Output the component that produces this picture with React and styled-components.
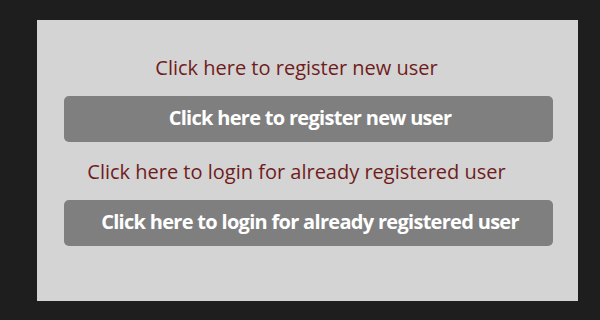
import React from 'react';
import styled, { createGlobalStyle } from 'styled-components';

const GlobalStyle = createGlobalStyle`
  body {
    margin: 0;
    background: #1e1e1e;
    font-family: "Open Sans", "Liberation Sans", sans-serif;
  }
`

const Page = styled.div`
  height: 320px;
  padding: 20px 22px 0 37px;
  box-sizing: border-box;
`

const Panel = styled.div`
  width: 541px;
  height: 281px;
  background: #d4d4d4;
  box-sizing: border-box;
  padding: 35px 25px 0 27px;
  display: flex;
  flex-direction: column;
`

const Label = styled.p`
  margin: 0 0 ${p => p.gap}px;
  padding-right: 24px;
  text-align: center;
  color: #701c1c;
  font-size: 20px;
  line-height: 26px;
`

const Button = styled.button`
  height: 46px;
  margin-bottom: ${p => p.gap}px;
  padding: 0 0 3px 3px;
  border: none;
  border-radius: 5px;
  background: #7f7f7f;
  color: #fff;
  font-family: inherit;
  font-weight: 700;
  font-size: 20px;
  letter-spacing: -0.7px;
  cursor: pointer;
`

const App = () => (
  <>
    <GlobalStyle />
    <Page>
      <Panel>
        <Label gap={15}>Click here to register new user</Label>
        <Button gap={17}>Click here to register new user</Button>
        <Label gap={15}>Click here to login for already registered user</Label>
        <Button gap={0}>Click here to login for already registered user</Button>
      </Panel>
    </Page>
  </>
);

export default App;
